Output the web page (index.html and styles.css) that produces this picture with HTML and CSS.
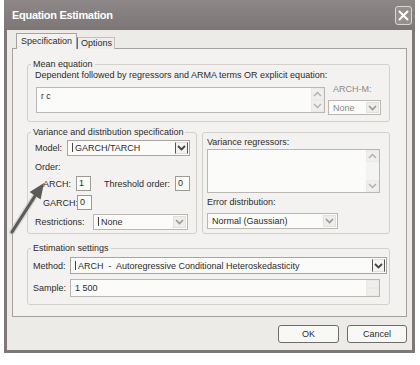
FILE: index.html
```html
<!DOCTYPE html>
<html lang="en">
<head>
    <meta charset="UTF-8">
    <title>Equation Estimation</title>
    <link rel="stylesheet" href="styles.css">
</head>
<body>

<div class="window">
    <div class="titlebar">
        <span class="title">Equation Estimation</span>
        <span class="close">
            <svg width="11" height="11" viewBox="0 0 11 11"><path d="M1.5 1.5 L9.5 9.5 M9.5 1.5 L1.5 9.5" stroke="#fff" stroke-width="2" stroke-linecap="round"/></svg>
        </span>
    </div>

    <div class="client">
        <div class="tabs">
            <div class="tab active">Specification</div>
            <div class="tab">Options</div>
        </div>

        <div class="panel">
            <!-- mean equation -->
            <fieldset class="group mean">
                <legend>Mean equation</legend>
                <div class="caption">Dependent followed by regressors and ARMA terms OR explicit equation:</div>
                <div class="mean-row">
                    <div class="textbox eq">
                        <span class="text">r c</span>
                        <div class="vscroll">
                            <span class="sb"><svg width="9" height="6" viewBox="0 0 9 6"><path d="M1 5 L4.5 1.5 L8 5" fill="none" stroke="#b4b2af" stroke-width="1.5"/></svg></span>
                            <span class="sb"><svg width="9" height="6" viewBox="0 0 9 6"><path d="M1 1 L4.5 4.5 L8 1" fill="none" stroke="#b4b2af" stroke-width="1.5"/></svg></span>
                        </div>
                    </div>
                    <div class="archm">
                        <div class="caption dim">ARCH-M:</div>
                        <div class="select archm-sel">
                            <span class="val dim">None</span>
                            <span class="drop"><svg width="9" height="6" viewBox="0 0 9 6"><path d="M1 1 L4.5 4.5 L8 1" fill="none" stroke="#9a9895" stroke-width="1.6"/></svg></span>
                        </div>
                    </div>
                </div>
            </fieldset>

            <!-- variance -->
            <div class="var-row">
                <fieldset class="group variance">
                    <legend>Variance and distribution specification</legend>
                    <div class="field model-row">
                        <span class="lbl w-model">Model:</span>
                        <div class="select focus model-sel">
                            <span class="val"><i class="caret"></i>GARCH/TARCH</span>
                            <span class="drop dark"><svg width="9" height="6" viewBox="0 0 9 6"><path d="M1 1 L4.5 4.5 L8 1" fill="none" stroke="#444" stroke-width="1.8"/></svg></span>
                        </div>
                    </div>
                    <div class="caption order">Order:</div>
                    <div class="field arch-row">
                        <span class="lbl indent w-arch">ARCH:</span>
                        <div class="num">1</div>
                        <span class="lbl w-thr">Threshold order:</span>
                        <div class="num">0</div>
                    </div>
                    <div class="field garch-row">
                        <span class="lbl indent w-garch">GARCH:</span>
                        <div class="num">0</div>
                    </div>
                    <div class="field restr-row">
                        <span class="lbl w-restr">Restrictions:</span>
                        <div class="select restr-sel">
                            <span class="val"><i class="caret"></i>None</span>
                            <span class="drop"><svg width="9" height="6" viewBox="0 0 9 6"><path d="M1 1 L4.5 4.5 L8 1" fill="none" stroke="#9a9895" stroke-width="1.6"/></svg></span>
                        </div>
                    </div>
                </fieldset>

                <fieldset class="group regressors">
                    <div class="caption">Variance regressors:</div>
                    <div class="textbox vreg">
                        <span class="text"></span>
                        <div class="vscroll">
                            <span class="sb"><svg width="9" height="6" viewBox="0 0 9 6"><path d="M1 5 L4.5 1.5 L8 5" fill="none" stroke="#b4b2af" stroke-width="1.5"/></svg></span>
                            <span class="sb"><svg width="9" height="6" viewBox="0 0 9 6"><path d="M1 1 L4.5 4.5 L8 1" fill="none" stroke="#b4b2af" stroke-width="1.5"/></svg></span>
                        </div>
                    </div>
                    <div class="caption errdist">Error distribution:</div>
                    <div class="select err-sel">
                        <span class="val">Normal (Gaussian)</span>
                        <span class="drop"><svg width="9" height="6" viewBox="0 0 9 6"><path d="M1 1 L4.5 4.5 L8 1" fill="none" stroke="#9a9895" stroke-width="1.6"/></svg></span>
                    </div>
                </fieldset>
            </div>

            <!-- estimation settings -->
            <fieldset class="group estimation">
                <legend>Estimation settings</legend>
                <div class="field method-row">
                    <span class="lbl w-method">Method:</span>
                    <div class="select focus method-sel">
                        <span class="val"><i class="caret"></i>ARCH&nbsp; -&nbsp; Autoregressive Conditional Heteroskedasticity</span>
                        <span class="drop dark"><svg width="9" height="6" viewBox="0 0 9 6"><path d="M1 1 L4.5 4.5 L8 1" fill="none" stroke="#444" stroke-width="1.8"/></svg></span>
                    </div>
                </div>
                <div class="field sample-row">
                    <span class="lbl w-method">Sample:</span>
                    <div class="textbox sample">
                        <span class="text">1 500</span>
                        <div class="vscroll">
                            <span class="sb"></span>
                            <span class="sb"></span>
                        </div>
                    </div>
                </div>
            </fieldset>
        </div>

        <div class="buttons">
            <button class="btn ok">OK</button>
            <button class="btn cancel">Cancel</button>
        </div>
    </div>

    <!-- hand drawn pointer over the order fields -->
    <svg class="pointer" width="50" height="65" viewBox="0 0 50 65">
        <path d="M8 57 L31 21" stroke="#c9c7c4" stroke-width="6" stroke-linecap="round" opacity="0.6"/>
        <path d="M8 57 L31 21" stroke="#5d5b59" stroke-width="3.2" stroke-linecap="round"/>
        <polygon points="40,8 36.6,24.4 25.6,17.1" fill="#5d5b59"/>
    </svg>
</div>

</body>
</html>
```

FILE: styles.css
```css
* {
    box-sizing: border-box;
}

body {
    margin: 0;
    background: #fff;
    font-family: "Liberation Sans", Arial, sans-serif;
    font-size: 9px;
    color: #2d2b2a;
}

.window {
    position: relative;
    width: 411px;
    height: 353px;
    margin-left: 4px;
    background: #ecebe8;
    border: 3px solid #7e7978;
    border-top: 0;
}

.titlebar {
    display: flex;
    align-items: center;
    justify-content: space-between;
    height: 30px;
    margin: 0 -3px;
    padding: 0 3px 0 8px;
    background: linear-gradient(#8d8887, #7c7776);
}

.title {
    color: #fff;
    font-weight: bold;
    font-size: 11px;
    letter-spacing: -0.3px;
}

.close {
    display: flex;
    align-items: center;
    justify-content: center;
    width: 17px;
    height: 19px;
    border: 1px solid #d8d5d3;
    border-radius: 3px;
    background: #95908e;
}

.client {
    padding: 3px 5px 0 5px;
}

/* tabs */
.tabs {
    display: flex;
    align-items: flex-end;
    height: 16px;
    margin: 0 0 -1px 4px;
}

.tab {
    height: 12px;
    width: 38px;
    padding-left: 3px;
    line-height: 11px;
    border: 1px solid #c4c1bd;
    border-left-color: #6f6c69;
    border-bottom: 0;
    background: #eeedea;
}

.tab.active {
    position: relative;
    z-index: 1;
    width: 61px;
    height: 16px;
    padding-left: 4px;
    line-height: 14px;
    border-color: #a6a39f;
    background: #f3f2f0;
}

.panel {
    height: 269px;
    padding: 10px 16px 0 14px;
    border: 1px solid #a5a29e;
    background: #f3f2f0;
}

/* group boxes */
.group {
    margin: 0;
    min-width: 0;
    border: 1px solid #d3d0cc;
    border-radius: 3px;
    padding: 0 5px 5px 7px;
}

.group legend {
    padding: 0 2px;
    margin-left: -4px;
    line-height: 11px;
    white-space: nowrap;
}

.caption {
    line-height: 11px;
    white-space: nowrap;
}

.dim {
    color: #8c8a87;
}

.textbox, .select, .num {
    background: #fbfbfa;
    border: 1px solid #bab7b3;
}

.textbox {
    display: flex;
}

.textbox .text {
    flex: 1;
    padding: 3px 0 0 4px;
    font-size: 8.5px;
}

.vscroll {
    display: flex;
    flex-direction: column;
    justify-content: space-between;
    width: 13px;
    background: #f4f4f2;
}

.sb {
    display: flex;
    align-items: center;
    justify-content: center;
    height: 12px;
    background: #f0efed;
    border: 1px solid #ebeae7;
}

.select {
    display: flex;
    align-items: center;
    padding: 1px;
}

.select .val {
    flex: 1;
    padding-left: 3px;
    white-space: nowrap;
    overflow: hidden;
}

.caret {
    display: inline-block;
    width: 1px;
    height: 9px;
    margin-right: 2px;
    vertical-align: -1px;
    background: #444;
}

.drop {
    display: flex;
    align-items: center;
    justify-content: center;
    width: 13px;
    height: 100%;
    background: #eeedeb;
    border: 1px solid #e2e0dd;
}

.drop.dark {
    border-left: 1px solid #555;
    border-right: 1px solid #555;
    background: #f4f3f1;
}

.select.focus {
    border-color: #a9a6a2;
}

/* mean equation */
.mean {
    padding-bottom: 6px;
}

.mean-row {
    display: flex;
    align-items: flex-start;
    gap: 3px;
    margin-top: 6px;
    margin-left: 1px;
}

.eq {
    width: 289px;
    height: 26px;
}

.archm {
    width: 53px;
    margin-top: -3px;
}

.archm .caption {
    padding-left: 5px;
}

.archm-sel {
    height: 15px;
    margin-top: 5px;
}

/* variance */
.var-row {
    display: flex;
    gap: 5px;
    margin-top: 5px;
}

.variance {
    width: 170px;
    padding-bottom: 3px;
}

.regressors {
    width: 188px;
    margin-top: 5px;
    padding: 4px 7px 0 4px;
}

.field {
    display: flex;
    align-items: center;
}

.lbl {
    flex-shrink: 0;
    white-space: nowrap;
}

.indent {
    padding-left: 8px;
}

.model-row {
    margin-top: 2px;
}

.w-model { width: 32px; }
.w-arch { width: 41px; }
.w-garch { width: 42px; }
.w-restr { width: 58px; }
.w-method { width: 37px; }

.w-thr {
    width: 71px;
    margin-left: 13px;
}

.model-sel {
    width: 123px;
    height: 16px;
}

.order {
    margin-top: 6px;
}

.num {
    width: 15px;
    height: 15px;
    padding-left: 2px;
    line-height: 13px;
    border-color: #9e9b97;
}

.arch-row {
    margin-top: 3px;
}

.garch-row {
    margin-top: 4px;
}

.restr-row {
    margin-top: 4px;
}

.restr-sel {
    width: 95px;
    height: 16px;
}

.vreg {
    width: 173px;
    height: 44px;
    margin-top: 1px;
}

.errdist {
    margin-top: 4px;
}

.err-sel {
    width: 131px;
    height: 16px;
    margin-top: 5px;
}

/* estimation settings */
.estimation {
    margin-top: 9px;
    padding: 0 2px 7px 5px;
}

.estimation legend {
    margin-left: -2px;
}

.method-row {
    margin-top: 3px;
}

.method-sel {
    width: 317px;
    height: 17px;
}

.sample-row {
    margin-top: 5px;
}

.sample {
    width: 310px;
    height: 18px;
}

.sample .text {
    padding-top: 3px;
    font-size: 9px;
}

/* dialog buttons */
.buttons {
    display: flex;
    justify-content: flex-end;
    gap: 8px;
    margin-top: 8px;
}

.btn {
    height: 18px;
    padding: 0;
    font-family: inherit;
    font-size: 9px;
    color: #2d2b2a;
    background: #f8f8f7;
    border: 1px solid #6f6c69;
    border-radius: 3px;
}

.ok { width: 61px; }
.cancel { width: 60px; }

.pointer {
    position: absolute;
    left: -3px;
    top: 175px;
}
```
